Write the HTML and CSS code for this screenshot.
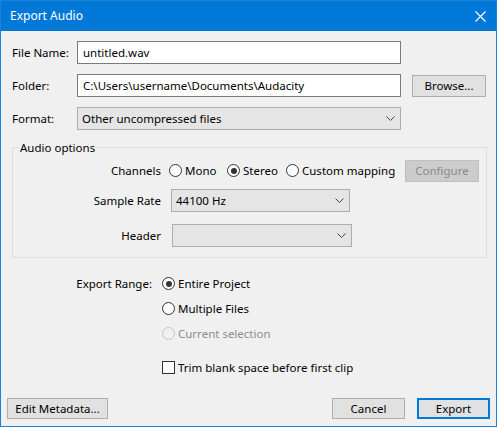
FILE: index.html
```html
<!DOCTYPE html>
<html lang="en">
<head>
    <meta charset="UTF-8">
    <title>Export Audio</title>
    <link rel="stylesheet" href="styles.css">
</head>
<body>
    <div class="window">
        <div class="titlebar">
            <span class="title">Export Audio</span>
            <svg class="close" width="11" height="11" viewBox="0 0 11 11">
                <path d="M0.5 0.5 L10.5 10.5 M10.5 0.5 L0.5 10.5" stroke="#fff" stroke-width="1.2" fill="none"/>
            </svg>
        </div>

        <div class="content">
            <div class="field-row">
                <label class="field-label">File Name:</label>
                <input class="text-input" type="text" value="untitled.wav">
            </div>
            <div class="field-row">
                <label class="field-label">Folder:</label>
                <input class="text-input" type="text" value="C:\Users\username\Documents\Audacity">
                <button class="btn browse-btn">Browse...</button>
            </div>
            <div class="field-row">
                <label class="field-label">Format:</label>
                <div class="select format-select">
                    <span>Other uncompressed files</span>
                    <svg class="chevron" width="9" height="5" viewBox="0 0 9 5"><path d="M0.5 0.5 L4.5 4.5 L8.5 0.5" stroke="#444" fill="none"/></svg>
                </div>
            </div>

            <fieldset class="group">
                <legend>Audio options</legend>
                <div class="group-row channels-row">
                    <span class="group-label">Channels</span>
                    <span class="option mono"><span class="radio"></span>Mono</span>
                    <span class="option stereo"><span class="radio checked"></span>Stereo</span>
                    <span class="option custom"><span class="radio"></span>Custom mapping</span>
                    <button class="btn configure-btn" disabled>Configure</button>
                </div>
                <div class="group-row">
                    <span class="group-label">Sample Rate</span>
                    <div class="select rate-select">
                        <span>44100 Hz</span>
                        <svg class="chevron" width="9" height="5" viewBox="0 0 9 5"><path d="M0.5 0.5 L4.5 4.5 L8.5 0.5" stroke="#444" fill="none"/></svg>
                    </div>
                </div>
                <div class="group-row">
                    <span class="group-label">Header</span>
                    <div class="select header-select">
                        <span></span>
                        <svg class="chevron" width="9" height="5" viewBox="0 0 9 5"><path d="M0.5 0.5 L4.5 4.5 L8.5 0.5" stroke="#444" fill="none"/></svg>
                    </div>
                </div>
            </fieldset>

            <div class="range">
                <div class="range-row">
                    <span class="range-label">Export Range:</span>
                    <span class="option"><span class="radio checked"></span>Entire Project</span>
                </div>
                <div class="range-row">
                    <span class="range-label"></span>
                    <span class="option"><span class="radio"></span>Multiple Files</span>
                </div>
                <div class="range-row">
                    <span class="range-label"></span>
                    <span class="option disabled"><span class="radio"></span>Current selection</span>
                </div>
                <div class="range-row trim-row">
                    <span class="range-label"></span>
                    <span class="option"><span class="checkbox"></span>Trim blank space before first clip</span>
                </div>
            </div>
        </div>

        <div class="bottom-bar">
            <button class="btn metadata-btn">Edit Metadata...</button>
            <div class="spacer"></div>
            <button class="btn cancel-btn">Cancel</button>
            <button class="btn export-btn">Export</button>
        </div>
    </div>
</body>
</html>
```

FILE: styles.css
```css
body {
    margin: 0;
    padding: 0;
    background-color: #f0f0f0;
    font-family: 'Noto Sans', 'Open Sans', sans-serif;
    font-size: 11.5px;
    color: #000;
}
.window {
    width: 497px;
    height: 427px;
    box-sizing: border-box;
    border: 1px solid #1883d7;
    background-color: #f0f0f0;
    display: flex;
    flex-direction: column;
}
.titlebar {
    height: 30px;
    background-color: #0078d7;
    color: white;
    display: flex;
    align-items: center;
    justify-content: space-between;
    padding: 0 10px 0 9px;
    flex-shrink: 0;
}
.title {
    font-size: 12px;
    padding-bottom: 1px;
}
.close {
    display: block;
}
.content {
    padding: 10px 0 0 11px;
    flex: 1;
}
.field-row {
    display: flex;
    align-items: center;
    height: 23px;
    margin-bottom: 10px;
}
.field-label {
    width: 65px;
    flex-shrink: 0;
}
.text-input {
    width: 324px;
    height: 23px;
    box-sizing: border-box;
    border: 1px solid #7a7a7a;
    background-color: white;
    padding: 0 5px;
    font-family: inherit;
    font-size: 11.5px;
    color: #000;
    margin: 0;
}
.btn {
    font-family: inherit;
    font-size: 11.5px;
    color: #000;
    background-color: #e1e1e1;
    border: 1px solid #adadad;
    box-sizing: border-box;
    height: 22px;
    padding: 0;
    margin: 0;
}
.browse-btn {
    width: 74px;
    margin-left: 11px;
}
.select {
    box-sizing: border-box;
    height: 23px;
    border: 1px solid #adadad;
    background-color: #e5e5e5;
    display: flex;
    align-items: center;
    justify-content: space-between;
    padding: 0 5px 0 4px;
}
.format-select {
    width: 324px;
}
.chevron {
    display: block;
}
.group {
    width: 475px;
    box-sizing: border-box;
    margin: 8px 0 0 0;
    padding: 5px 0 10px 0;
    border: 1px solid #dcdcdc;
}
.group legend {
    margin-left: 6px;
    padding: 0 1px;
    line-height: 15px;
}
.group-row {
    display: flex;
    align-items: center;
    height: 23px;
    margin-bottom: 12px;
}
.group-row:last-child {
    margin-bottom: 0;
}
.channels-row {
    height: 21px;
    margin-bottom: 8px;
}
.group-label {
    width: 148px;
    text-align: right;
    flex-shrink: 0;
}
.option {
    display: flex;
    align-items: center;
    white-space: nowrap;
}
.channels-row .option {
    flex-shrink: 0;
}
.mono {
    margin-left: 8px;
    width: 58px;
}
.stereo {
    width: 59px;
}
.custom {
    width: 119px;
}
.radio {
    width: 13px;
    height: 13px;
    box-sizing: border-box;
    border: 1px solid #333;
    border-radius: 50%;
    background-color: white;
    margin-right: 3px;
    position: relative;
    flex-shrink: 0;
}
.radio.checked::after {
    content: "";
    position: absolute;
    left: 2.5px;
    top: 2.5px;
    width: 6px;
    height: 6px;
    border-radius: 50%;
    background-color: #333;
}
.disabled {
    color: #8d8d8d;
}
.disabled .radio {
    border-color: #c4c4c4;
    background-color: #f0f0f0;
}
.configure-btn {
    width: 74px;
    color: #8a8a8a;
    background-color: #cccccc;
    border-color: #bfbfbf;
}
.rate-select {
    width: 179px;
    margin-left: 10px;
}
.header-select {
    width: 180px;
    margin-left: 11px;
}
.range {
    margin-top: 19px;
}
.range-row {
    display: flex;
    align-items: center;
    height: 13px;
    margin-bottom: 12px;
}
.range-label {
    width: 150px;
    text-align: right;
    padding-right: 10px;
    flex-shrink: 0;
    box-sizing: border-box;
}
.trim-row {
    margin-top: 21px;
}
.checkbox {
    width: 13px;
    height: 13px;
    box-sizing: border-box;
    border: 1px solid #333;
    background-color: white;
    margin-right: 3px;
    flex-shrink: 0;
}
.bottom-bar {
    display: flex;
    align-items: center;
    padding: 0 6px 7px 6px;
}
.spacer {
    flex: 1;
}
.metadata-btn {
    width: 101px;
    height: 21px;
}
.cancel-btn {
    width: 73px;
    height: 21px;
}
.export-btn {
    width: 73px;
    height: 21px;
    margin-left: 12px;
    border: 2px solid #0078d7;
}
```
